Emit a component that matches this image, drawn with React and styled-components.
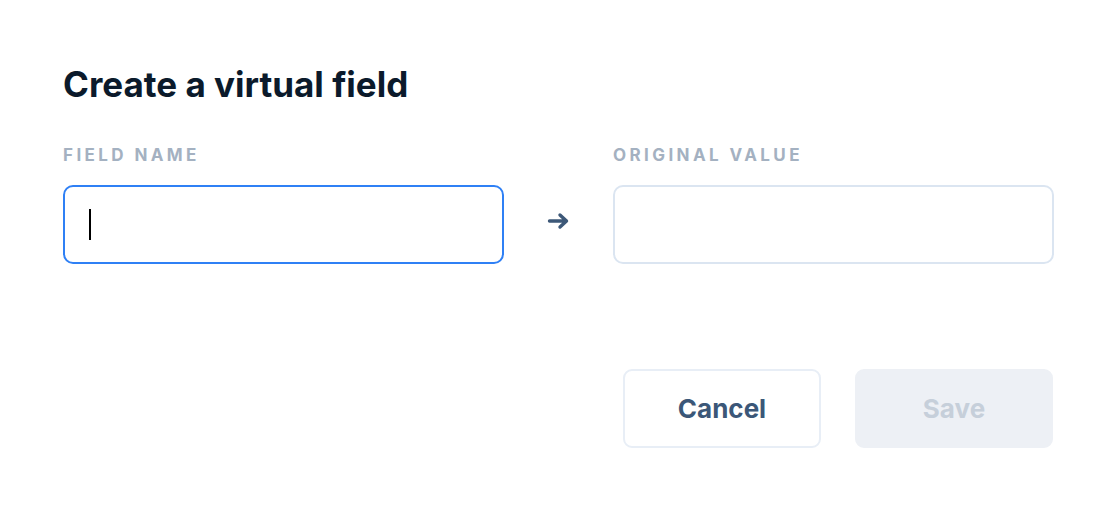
import React from "react";
import styled, { createGlobalStyle } from "styled-components";

const GlobalStyle = createGlobalStyle`
  body {
    margin: 0;
    background: #ffffff;
    font-family: "Inter", "Noto Sans", sans-serif;
  }
`;

function App() {
  return (
    <>
      <GlobalStyle />
      <Dialog>
        <Title>Create a virtual field</Title>
        <FieldRow>
          <Field>
            <Label>Field name</Label>
            <InputBox focused>
              <Caret />
            </InputBox>
          </Field>
          <ArrowCell>
            <svg width="24" height="18" viewBox="0 0 24 18">
              <path
                d="M2.5 9h17M13 3l6.5 6-6.5 6"
                fill="none"
                stroke="#3d5878"
                strokeWidth="3.4"
                strokeLinecap="round"
                strokeLinejoin="round"
              />
            </svg>
          </ArrowCell>
          <Field>
            <Label>Original value</Label>
            <InputBox />
          </Field>
        </FieldRow>
        <Actions>
          <Button>Cancel</Button>
          <Button primary disabled>
            Save
          </Button>
        </Actions>
      </Dialog>
    </>
  );
}

const Dialog = styled.div`
  display: flex;
  flex-direction: column;
  width: 991px;
  padding: 62px 58px 58px 63px;
`;

const Title = styled.h1`
  margin: 0;
  font-size: 35px;
  line-height: 44px;
  font-weight: 700;
  letter-spacing: 0;
  color: #0b1a2b;
`;

const FieldRow = styled.div`
  display: flex;
  align-items: flex-end;
  margin-top: 39px;
`;

const Field = styled.div`
  display: flex;
  flex-direction: column;
  gap: 20px;
  width: 441px;
`;

const Label = styled.div`
  font-size: 17px;
  line-height: 20px;
  font-weight: 700;
  letter-spacing: 3.4px;
  text-transform: uppercase;
  color: #a4b1c1;
`;

const InputBox = styled.div`
  box-sizing: border-box;
  display: flex;
  align-items: center;
  height: 79px;
  padding: 0 24px;
  border-radius: 10px;
  border: 2px solid ${(p) => (p.focused ? "#2f80f5" : "#dbe5f1")};
  background: #ffffff;
`;

const Caret = styled.span`
  display: block;
  width: 2px;
  height: 31px;
  background: #000000;
`;

const ArrowCell = styled.div`
  display: flex;
  align-items: center;
  justify-content: center;
  width: 109px;
  height: 79px;
  margin-bottom: 4px;
`;

const Actions = styled.div`
  display: flex;
  justify-content: flex-end;
  gap: 34px;
  margin-top: 105px;
  padding-right: 1px;
`;

const Button = styled.button`
  box-sizing: border-box;
  width: 198px;
  height: 79px;
  border-radius: 9px;
  border: 2px solid ${(p) => (p.primary ? "#edf0f5" : "#e8eef6")};
  background: ${(p) => (p.primary ? "#edf0f5" : "#ffffff")};
  color: ${(p) => (p.primary ? "#c6cfda" : "#3b5778")};
  font-family: "Inter", "Noto Sans", sans-serif;
  font-size: 26px;
  font-weight: 700;
  cursor: pointer;
`;

export default App;
